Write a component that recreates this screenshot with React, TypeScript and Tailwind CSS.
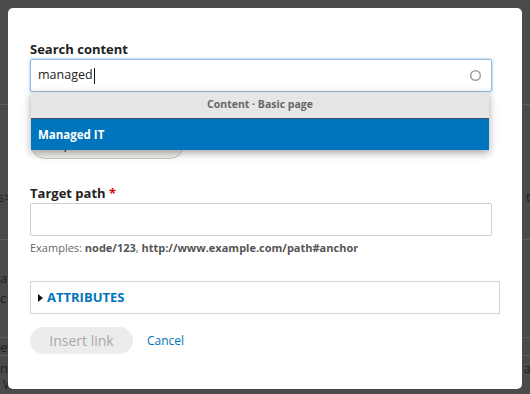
import React from "react";

export default function App() {
  const font = { fontFamily: '"Open Sans", "DejaVu Sans", sans-serif' };
  return (
    <div className="relative w-[530px] h-[394px] overflow-hidden bg-[#4a4a4a] text-[#2a2a2a]" style={font}>
      {/* dimmed page behind the dialog */}
      <div className="flex flex-col text-[13px] text-[#1e1e1e]">
        <div className="h-[105px] border-b border-[#5c5c5c]" />
        <div className="h-[82px]" />
        <div className="flex justify-between h-[20px] leading-[20px]">
          <span className="-ml-[2px]">s&gt;</span>
          <span className="mr-[-6px]">tr</span>
        </div>
        <div className="h-[33px] border-b border-[#5c5c5c]" />
        <div className="h-[28px]" />
        <div className="h-[20px] leading-[20px]">at</div>
        <div className="h-[20px] leading-[20px]">c</div>
        <div className="h-[30px] border-b border-[#5c5c5c]" />
        <div className="flex justify-between h-[18px] leading-[18px] border-b border-[#5c5c5c]">
          <span>ew</span>
          <span />
        </div>
        <div className="flex justify-between h-[20px] leading-[20px] mt-[2px]">
          <span>n</span>
          <span className="mr-[-1px]">a</span>
        </div>
        <div className="h-[14px] leading-[12px] ml-[3px]">Work.</div>
      </div>

      {/* modal dialog */}
      <div className="absolute left-[8px] top-[8px] w-[514px] h-[381px] bg-white rounded-[5px]">
        <div className="flex flex-col pl-[22px] pt-[32px] w-[484px]">
          <label className="text-[13px] font-bold leading-[19px] text-[#222]">Search content</label>
          <div className="relative">
            <div className="flex items-center h-[33px] w-[462px] border border-[#8fbbe4] rounded-[2px] shadow-[0_0_3px_rgba(60,140,220,0.6)] pl-[7px] pr-[9px]">
              <span className="text-[12.5px] text-[#222] leading-none">managed</span>
              <span className="w-[1px] h-[16px] bg-[#111] ml-[1px]" />
              <span className="flex-1" />
              <svg width="13" height="13" viewBox="0 0 13 13">
                <circle cx="6.5" cy="6.5" r="4.8" fill="none" stroke="#a3a3a3" strokeWidth="1.6" />
              </svg>
            </div>
            {/* autocomplete dropdown */}
            <div className="absolute left-[1px] top-[33px] w-[458px] z-10 shadow-[0_3px_8px_rgba(0,0,0,0.35)]">
              <div className="h-[26px] bg-[#e6e6e6] flex items-center justify-center text-[10.5px] font-bold text-[#666]">
                Content · Basic page
              </div>
              <div className="h-[32px] bg-[#0074bd] border-t border-[#3b5163] flex items-center pl-[7px] text-[11.5px] font-bold text-white">
                Managed IT
              </div>
            </div>
          </div>
          <div className="mt-[39px] flex">
            <div className="h-[28px] w-[153px] ml-[1px] rounded-full bg-[#f2f1eb] border border-[#c9c7bf] flex items-center justify-center text-[13px] text-[#333]">
              Open file browser
            </div>
          </div>
          <label className="mt-[25px] text-[13px] font-bold leading-[19px] text-[#222]">
            Target path <span className="text-[#e00000]">*</span>
          </label>
          <div className="h-[33px] w-[462px] border border-[#cfcfcf] rounded-[2px]" />
          <div className="mt-[4px] text-[11px] leading-[16px] text-[#666]">
            Examples: <span className="font-bold text-[#555]">node/123</span>,{" "}
            <span className="font-bold text-[#555]">http://www.example.com/path#anchor</span>
          </div>
          <div className="mt-[25px] h-[33px] w-[470px] border border-[#d4d4d4] flex items-center pl-[7px]">
            <svg width="5" height="8" viewBox="0 0 5 8" className="mr-[4px]">
              <path d="M0 0 L5 4 L0 8 Z" fill="#111" />
            </svg>
            <span className="text-[13px] font-bold text-[#0074bd]">ATTRIBUTES</span>
          </div>
          <div className="mt-[13px] flex items-center">
            <div className="h-[27px] w-[103px] rounded-full bg-[#ececec] flex items-center justify-center text-[14px] text-[#a8a8a8]">
              Insert link
            </div>
            <span className="ml-[14px] text-[12px] text-[#0074bd]">Cancel</span>
          </div>
        </div>
      </div>
    </div>
  );
}
